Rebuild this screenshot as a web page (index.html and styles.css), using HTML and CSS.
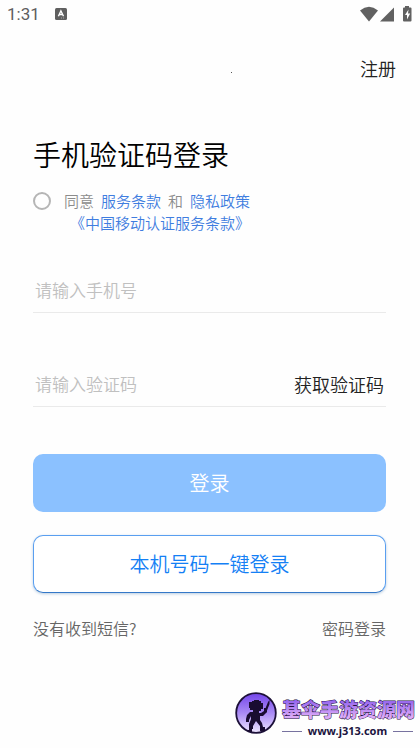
FILE: index.html
```html
<!DOCTYPE html>
<html lang="zh-CN">
<head>
<meta charset="utf-8">
<meta name="viewport" content="width=device-width, initial-scale=1">
<title>手机验证码登录</title>
<link rel="stylesheet" href="styles.css">
</head>
<body>
<div class="status">
  <span class="clock">1:31</span>
  <svg class="app-icon" width="12" height="12" viewBox="0 0 12 12" aria-hidden="true"><rect width="12" height="12" rx="1.5" fill="#5f5f5f"/><path d="M3.4 8.2 5.9 2.8 8.5 8.2M4.4 6.5h3" fill="none" stroke="#fff" stroke-width="1.4"/><path d="M6 10h3" stroke="#aaa" stroke-width="1" stroke-dasharray="1 1"/></svg>
  <svg class="signals" width="53" height="17" viewBox="0 0 53 17" aria-hidden="true">
    <path d="M0 4.500Q9-2.800 18 4.500L9 15.500Z" fill="#616161"/>
    <path d="M34 1.500V15.500H20Z" fill="#616161"/>
    <path d="M45 1.500V0h4v1.500h1.500q1 0 1 1V14.500q0 1-1 1h-6.500q-1 0-1-1v-12q0-1 1-1Z" fill="#616161"/>
    <path d="M48.500 3.500 45 9h2v4.500L50.200 7.500H48Z" fill="#fff"/>
  </svg>
</div>
<header class="topbar"><span class="dot"></span><a class="register" href="#register">注册</a></header>
<main>
  <h1>手机验证码登录</h1>
  <form>
    <div class="agree">
      <input type="checkbox" id="agree">
      <div class="terms">
        <div class="terms-line"><label for="agree">同意</label><a href="#service">服务条款</a><span>和</span><a href="#privacy">隐私政策</a></div>
        <a class="carrier" href="#carrier">《中国移动认证服务条款》</a>
      </div>
    </div>
    <div class="field"><input type="tel" aria-label="手机号" placeholder="请输入手机号"></div>
    <div class="field"><input type="text" aria-label="验证码" placeholder="请输入验证码"><button class="code" type="button">获取验证码</button></div>
    <button class="btn primary" type="submit">登录</button>
    <button class="btn outline" type="button">本机号码一键登录</button>
    <div class="links"><a href="#help">没有收到短信?</a><a href="#password">密码登录</a></div>
  </form>
</main>
<footer>
  <svg class="badge" width="42" height="42" viewBox="0 0 42 42" aria-hidden="true">
    <defs><linearGradient id="disc" x2="0" y2="1"><stop offset="0" stop-color="#7445ea"/><stop offset=".5" stop-color="#a98af5"/><stop offset="1" stop-color="#eee6ff"/></linearGradient></defs>
    <circle cx="21" cy="21" r="19.800" fill="url(#disc)" stroke="#1c1038" stroke-width="1.800"/>
    <path d="M15 10h2V9h2V8h5v1h2v2h2v6h-2v2h-2v2h2l3-2v-3h3v4l-4 4h-3v4l2 3 1 4h2v4h-5v-5l-4-5-3 5v3h-1v3h-4v-2h1v-6l2-5v-3l-2 4v2h-3v-3l1-4 3-3h3v-2h-3v-2h-1v-6h1Z" fill="#190c31"/>
    <path d="M29 20 33 10l1.500-2v4L31 21Z" fill="#190c31"/>
  </svg>
  <div class="brand">
    <svg class="brand-name" width="131" height="22" viewBox="0 0 131 22" aria-hidden="true">
      <defs><linearGradient id="ink" x2="0" y2="1"><stop offset="0.100" stop-color="#8758ec"/><stop offset="0.800" stop-color="#dcaaf8"/></linearGradient></defs>
      <text class="brand-text" x="0" y="17">基伞手游资源网</text>
    </svg>
    <div class="site"><i></i><span>www.j313.com</span><i></i></div>
  </div>
</footer>
</body>
</html>
```
FILE: styles.css
```css
* { box-sizing: border-box; }
body {
  margin: 0;
  min-height: 100vh;
  display: flex;
  flex-direction: column;
  background: #fefefe;
  color: #222;
  font-family: "Noto Sans CJK SC", sans-serif;
  font-weight: 350;
}
a { color: inherit; text-decoration: none; }
button, input { font: inherit; border: 0; background: none; padding: 0; margin: 0; }
h1 { margin: 0; font-size: 28px; line-height: 40px; font-weight: 350; color: #000; }
.status { display: flex; align-items: center; height: 28px; padding: 0 7px; }
.clock { font: 17px/28px Roboto, sans-serif; color: #5f5f5f; }
.app-icon { margin-left: 15px; }
.signals { margin-left: auto; }
.topbar {
  display: grid;
  grid-template-columns: 1fr auto 1fr;
  align-items: center;
  height: 80px;
  padding: 0 24px 0 66px;
}
.dot { grid-column: 2; width: 1px; height: 1px; margin-top: 9px; background: #555; }
.register { justify-self: end; font-size: 18px; line-height: 28px; }
main { padding: 26px 34px 0 33px; }
.agree { display: flex; margin-top: 16px; }
.agree input {
  appearance: none;
  width: 18px;
  height: 18px;
  margin-top: 2px;
  border: 2px solid #b5b5b5;
  border-radius: 50%;
}
.terms { margin-left: 13px; line-height: 22px; font-size: 15px; color: #3f7de0; }
.terms-line { display: flex; gap: 7px; }
.terms-line label, .terms-line span { color: #8c8c8c; }
.carrier { display: block; margin-left: 6px; }
.field { display: flex; align-items: center; height: 44px; border-bottom: 1px solid #eaeaea; padding: 0 2px 2px; }
.field + .field { margin-top: 50px; }
.agree + .field { margin-top: 35px; }
.field input { flex: 1; min-width: 0; font-size: 17px; line-height: 24px; outline: 0; }
.field input::placeholder { color: #c0c0c0; opacity: 1; }
.code { font-size: 18px; line-height: 24px; color: #222; }
.btn { display: block; width: 100%; height: 58px; padding-bottom: 2px; border-radius: 10px; font-size: 20px; }
.primary { margin-top: 47px; background: #8bc1ff; color: #fff; }
.outline { margin-top: 23px; background: #fff; color: #1480f5; border: 1px solid #5a9ff0; border-bottom-color: #3478c8; box-shadow: 0 1px 3px #b8cce0; }
.links { display: flex; justify-content: space-between; margin-top: 23px; font-size: 16px; line-height: 24px; color: #666; }
footer { display: flex; margin-top: auto; padding: 0 7px 10px 0; justify-content: flex-end; }
.badge { margin-right: 5px; }
.brand { margin-top: 8px; }
.brand-name { display: block; overflow: visible; margin-bottom: 2px; }
.brand-text { font-size: 19px; font-weight: 900; fill: url(#ink); stroke: #24113f; stroke-width: 1px; paint-order: stroke; stroke-linejoin: round; }
.site { display: flex; align-items: center; justify-content: space-between; font: 700 11px/14px "Noto Sans", sans-serif; color: #201440; }
.site i { width: 20px; height: 1px; background: #77729f; }
```
